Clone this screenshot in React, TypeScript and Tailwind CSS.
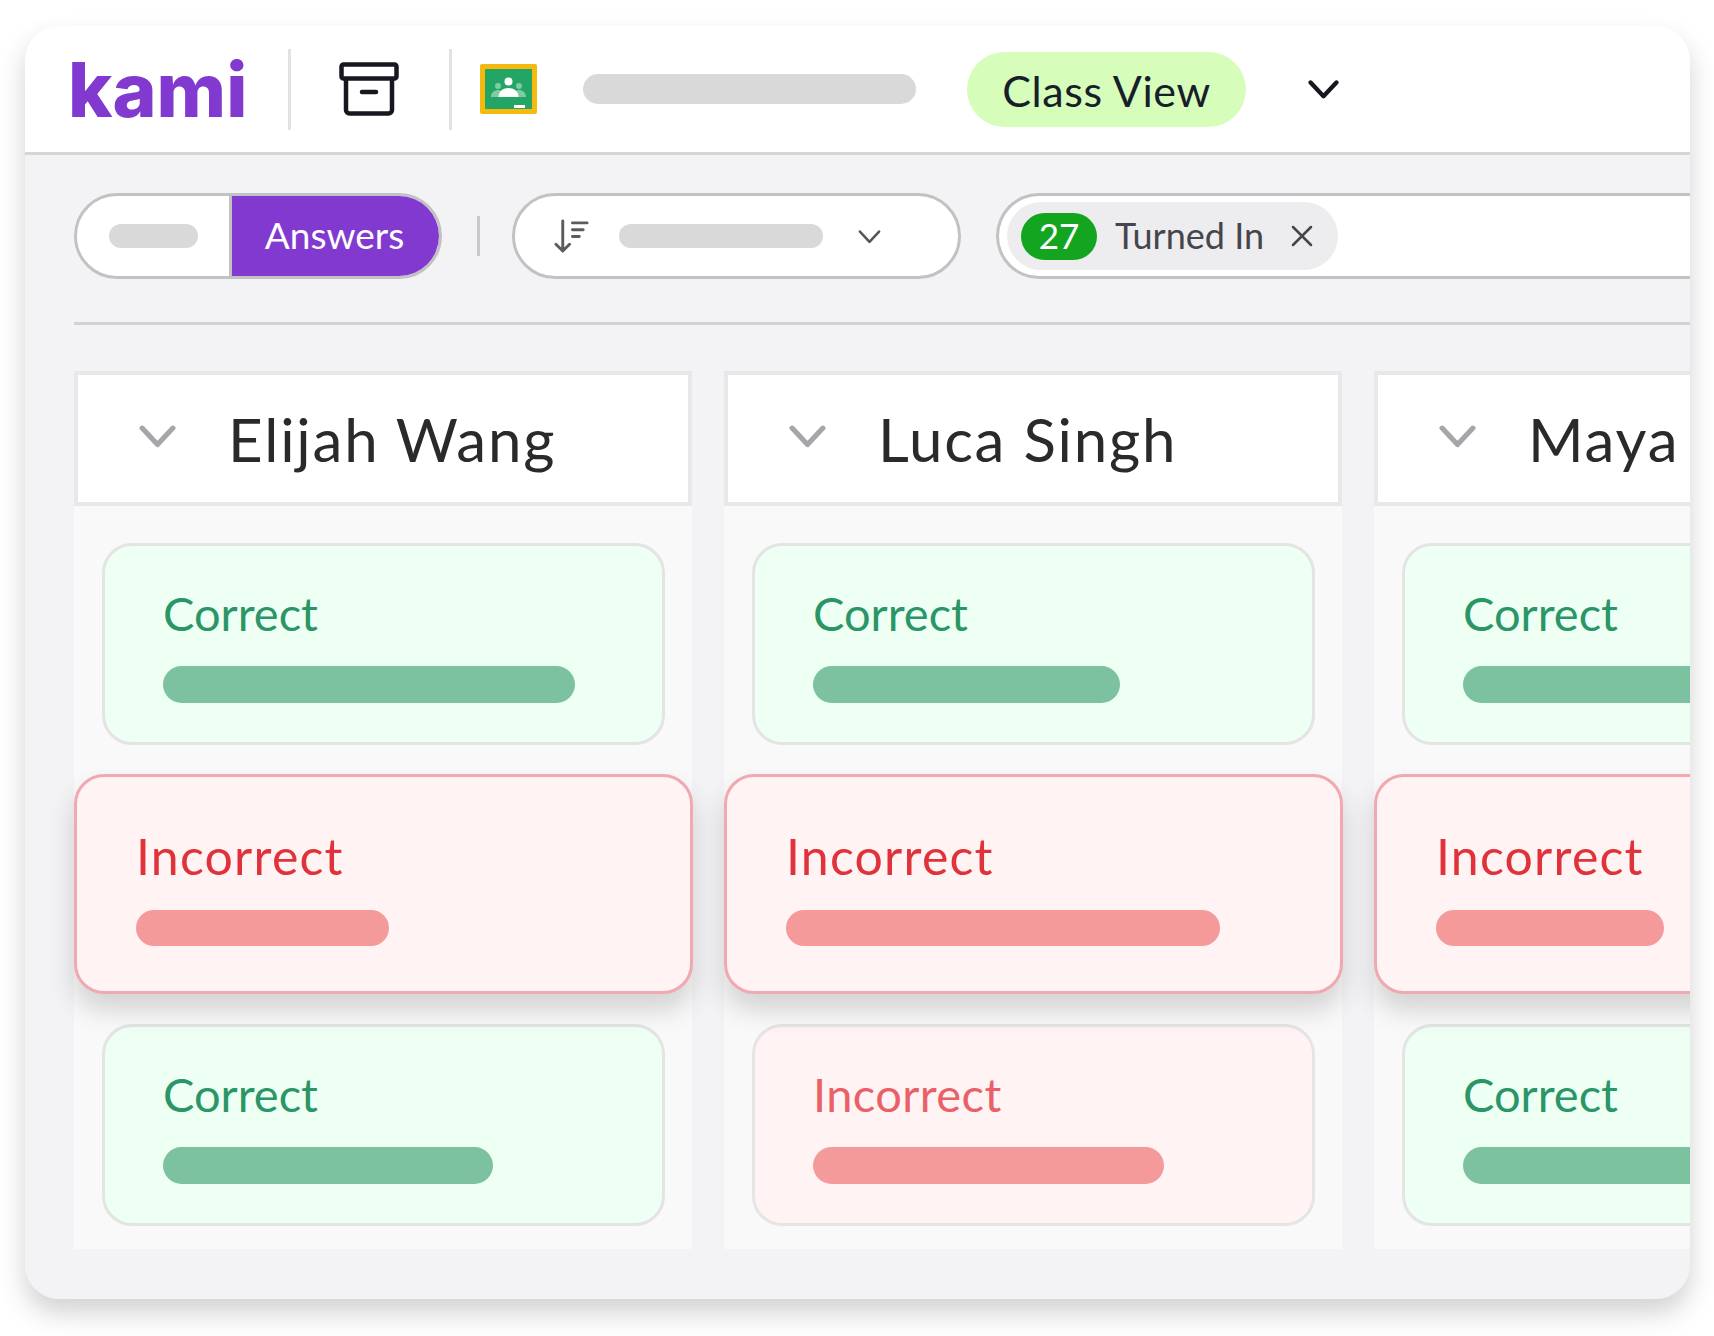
const students = [
  {
    name: "Elijah Wang",
    cards: [
      { kind: "correct", bar: "w-[412px]" },
      { kind: "focus", bar: "w-[253px]" },
      { kind: "correct", bar: "w-[330px]" },
    ],
  },
  {
    name: "Luca Singh",
    cards: [
      { kind: "correct", bar: "w-[307px]" },
      { kind: "focus", bar: "w-[434px]" },
      { kind: "incorrect", bar: "w-[351px]" },
    ],
  },
  {
    name: "Maya",
    cards: [
      { kind: "correct", bar: "w-[412px]" },
      { kind: "focus", bar: "w-[228px]" },
      { kind: "correct", bar: "w-[412px]" },
    ],
  },
];

function AnswerCard({ kind, bar }: { kind: string; bar: string }) {
  if (kind === "focus") {
    return (
      <div className="relative z-10 -mx-[28px] -mt-[1px] h-[220px] shrink-0 rounded-[30px] border-[3px] border-[#f0a9b0] bg-[#fff4f3] pl-[59px] pt-[51px] shadow-[0_16px_26px_rgba(60,60,60,0.2)]">
        <div className="text-[50px] leading-[56px] tracking-[1.2px] text-[#e0323a]">Incorrect</div>
        <div className={`mt-[26px] h-[36px] rounded-full bg-[#f49a9a] ${bar}`} />
      </div>
    );
  }
  const isCorrect = kind === "correct";
  return (
    <div
      className={
        isCorrect
          ? "h-[202px] shrink-0 rounded-[30px] border-[3px] border-[#e3e4e4] bg-[#eefff4] pl-[58px] pt-[39px]"
          : "h-[202px] shrink-0 rounded-[30px] border-[3px] border-[#e6e4e5] bg-[#fff4f3] pl-[58px] pt-[39px]"
      }
    >
      <div className={isCorrect ? "text-[47px] leading-[56px] text-[#2a9668]" : "text-[47px] leading-[56px] tracking-[0.4px] text-[#ea6068]"}>
        {isCorrect ? "Correct" : "Incorrect"}
      </div>
      <div className={`mt-[25px] h-[37px] rounded-full ${isCorrect ? "bg-[#7dc2a0]" : "bg-[#f49a9a]"} ${bar}`} />
    </div>
  );
}

function Chevron({ className, width, weight = 4 }: { className: string; width: number; weight?: number }) {
  return (
    <svg viewBox="0 0 36 24" fill="none" stroke="currentColor" width={width} className={className}>
      <path d="M3 4 L18 20 L33 4" strokeWidth={weight} strokeLinecap="round" strokeLinejoin="round" />
    </svg>
  );
}

function ClassroomIcon() {
  return (
    <svg viewBox="0 0 57 50" width="57" height="50" className="shrink-0">
      <rect width="57" height="50" rx="2" fill="#f6b90f" />
      <rect x="5" y="5" width="47" height="40" fill="#23a566" />
      <circle cx="18" cy="22" r="3" fill="#7fcba4" />
      <circle cx="39" cy="22" r="3" fill="#7fcba4" />
      <path d="M11 33c0-5 4-7 7-7s7 2 7 7zM32 33c0-5 4-7 7-7s7 2 7 7z" fill="#7fcba4" />
      <circle cx="28.5" cy="17.5" r="4" fill="#fff" />
      <path d="M18.5 33c0-6 5-9 10-9s10 3 10 9z" fill="#fff" />
      <rect x="34" y="41" width="11" height="3" fill="#fff" />
    </svg>
  );
}

export default function App() {
  return (
    <div className="h-[1336px] w-[1714px] overflow-hidden bg-white pl-[25px] pt-[26px] font-['Lato',sans-serif]">
      <div className="h-[1273px] w-[1665px] overflow-hidden rounded-[34px] bg-[#f3f3f5] shadow-[0_14px_26px_rgba(50,50,50,0.22)]">
        <header className="flex h-[129px] items-center border-b-[3px] border-[#d6d6d8] bg-white pl-[44px]">
          <div className="-ml-[1px] w-[177px] pt-[2px] font-['Inter',sans-serif] text-[75px] font-extrabold leading-[78px] text-[#8139cf]">kami</div>
          <div className="ml-[43px] h-[81px] w-[3px] bg-[#e2e2e4]" />
          <svg viewBox="0 0 60 54" fill="none" stroke="#17171f" strokeWidth="4.5" width="60" height="54" className="ml-[48px] shrink-0">
            <rect x="2.5" y="2.5" width="55" height="14" rx="2" />
            <path d="M7 17v31a3.500 3.500 0 0 0 3.500 3.500h39a3.500 3.500 0 0 0 3.500-3.500V17" />
            <path d="M23 30h14" strokeLinecap="round" />
          </svg>
          <div className="ml-[50px] h-[81px] w-[3px] bg-[#e2e2e4]" />
          <div className="ml-[28px]">
            <ClassroomIcon />
          </div>
          <div className="ml-[46px] h-[30px] w-[333px] rounded-full bg-[#d9d9d9]" />
          <div className="ml-[51px] flex h-[75px] w-[279px] items-center justify-center rounded-full bg-[#d6fdb9] pt-[4px] text-[43px] tracking-[0.6px] text-[#17202a]">
            Class View
          </div>
          <Chevron className="ml-[62px] text-[#17171f]" width={31} weight={5} />
        </header>

        <div className="ml-[49px] border-b-[3px] border-[#d2d2d4] pb-[43px] pt-[38px]">
          <div className="flex h-[86px] items-center">
            <div className="flex h-full w-[368px] overflow-hidden rounded-full border-[3px] border-[#c2c2c4] bg-white">
              <div className="flex w-[155px] items-center border-r-[3px] border-[#c2c2c4] pl-[32px]">
                <div className="h-[24px] w-[89px] rounded-full bg-[#d9d9d9]" />
              </div>
              <div className="flex flex-1 items-center justify-center bg-[#8139cf] pb-[2px] pr-[2px] text-[37px] text-white">Answers</div>
            </div>
            <div className="ml-[35px] h-[40px] w-[3px] bg-[#c9c9cb]" />
            <div className="ml-[32px] flex h-full w-[449px] items-center rounded-full border-[3px] border-[#c2c2c4] bg-white pl-[39px]">
              <svg viewBox="0 0 36 36" fill="none" stroke="#5c5c60" strokeWidth="3" strokeLinecap="round" strokeLinejoin="round" width="35" height="35" className="shrink-0">
                <path d="M9 2v31M2 26l7 7 7-7" />
                <path d="M19 4h15M19 11h11M19 18h7" />
              </svg>
              <div className="ml-[30px] h-[24px] w-[204px] rounded-full bg-[#d9d9d9]" />
              <Chevron className="ml-[35px] mt-[2px] text-[#55555a]" width={23} />
            </div>
            <div className="ml-[35px] flex h-full flex-1 items-center rounded-l-full border-y-[3px] border-l-[3px] border-[#c2c2c4] bg-white pl-[8px]">
              <div className="flex h-[68px] w-[331px] items-center rounded-full bg-[#ededef] pl-[14px]">
                <div className="flex h-[47px] w-[76px] items-center justify-center rounded-full bg-[#13a51f] pb-[2px] text-[35px] text-white">27</div>
                <span className="ml-[18px] pb-[2px] text-[36px] text-[#45454c]">Turned In</span>
                <svg viewBox="0 0 22 22" fill="none" stroke="#45454c" strokeWidth="2.500" strokeLinecap="round" width="22" height="22" className="ml-[27px] shrink-0">
                  <path d="M2 2l18 18M20 2L2 20" />
                </svg>
              </div>
            </div>
          </div>
        </div>

        <div className="ml-[49px] mt-[46px] flex gap-[32px]">
          {students.map((student) => (
            <section key={student.name} className="w-[618px] shrink-0 bg-[#f9f9fa]">
              <div className="flex h-[135px] items-center overflow-hidden border-[4px] border-[#e8e8ea] bg-white pl-[61px]">
                <Chevron className="-mt-[5px] shrink-0 text-[#a5a5aa]" width={37} weight={5} />
                <h2 className="ml-[52px] whitespace-nowrap text-[60px] font-normal tracking-[1.8px] text-[#2a2a2c]">{student.name}</h2>
              </div>
              <div className="flex flex-col gap-[30px] pb-[23px] pl-[28px] pr-[27px] pt-[37px]">
                {student.cards.map((card, i) => (
                  <AnswerCard key={i} kind={card.kind} bar={card.bar} />
                ))}
              </div>
            </section>
          ))}
        </div>
      </div>
    </div>
  );
}
